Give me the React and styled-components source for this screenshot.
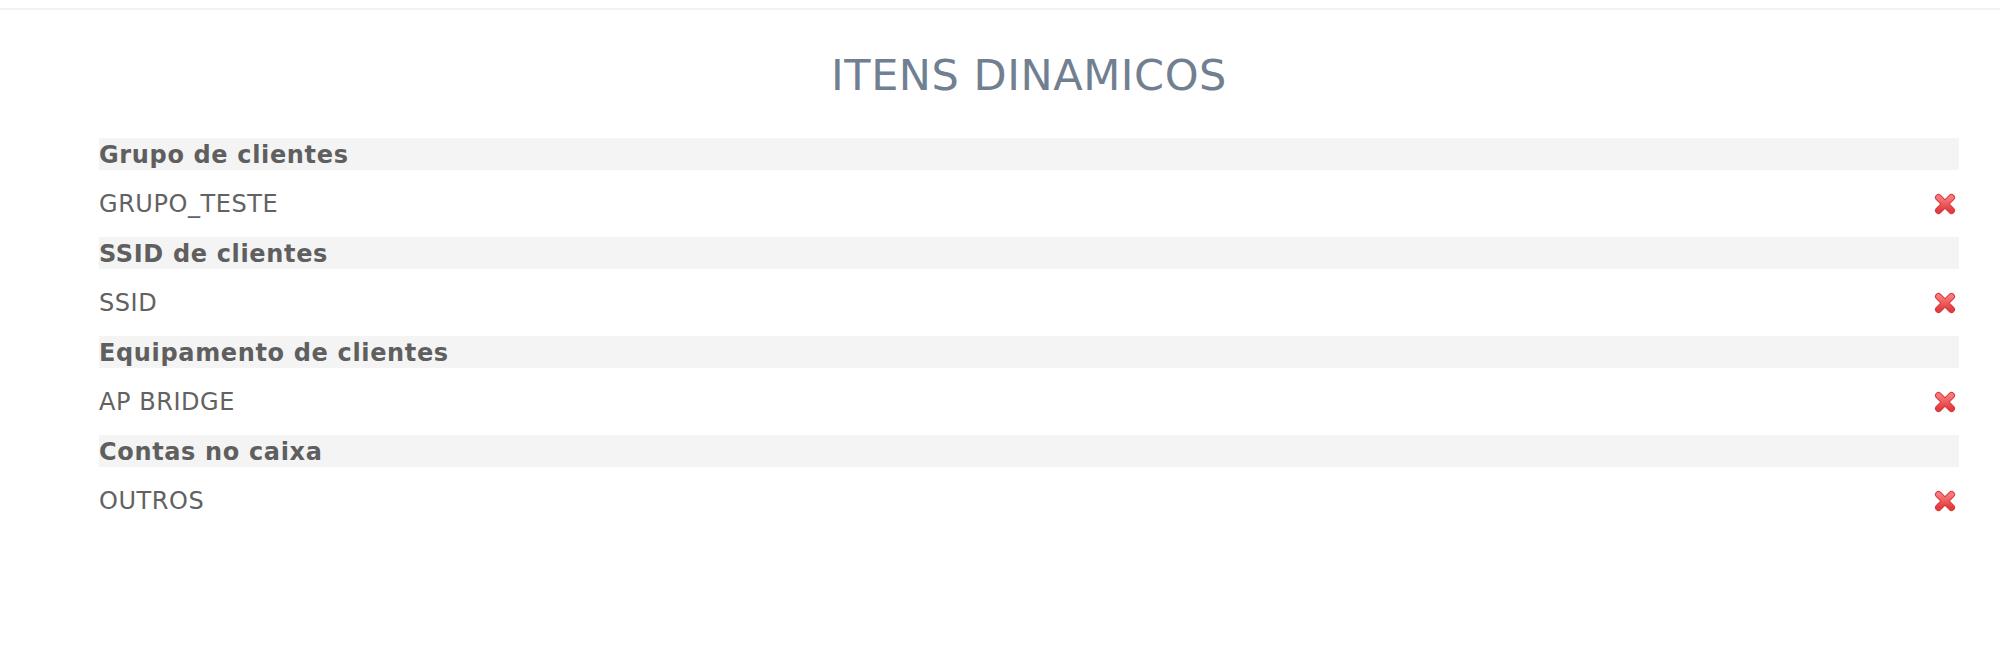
import React from 'react'
import styled, { createGlobalStyle } from 'styled-components'

const groups = [
	{ title: 'Grupo de clientes', items: ['GRUPO_TESTE'] },
	{ title: 'SSID de clientes', items: ['SSID'] },
	{ title: 'Equipamento de clientes', items: ['AP BRIDGE'] },
	{ title: 'Contas no caixa', items: ['OUTROS'] },
]

const GlobalStyle = createGlobalStyle`
	html, body {
		margin: 0;
		padding: 0;
		background: #ffffff;
	}
	body {
		font-family: 'DejaVu Sans', Verdana, sans-serif;
	}
`

const DeleteIcon = () => (
	<svg width="24" height="24" viewBox="0 0 24 24">
		<defs>
			<linearGradient id="xred" x1="0" y1="0" x2="0" y2="1">
				<stop offset="0" stopColor="#f77b7b" />
				<stop offset="1" stopColor="#e23c3f" />
			</linearGradient>
		</defs>
		<g strokeLinecap="round">
			<path d="M5.5 5.5 L18.5 18.5 M18.5 5.5 L5.5 18.5" stroke="#d8393c" strokeWidth="7" />
			<path d="M5.5 5.5 L18.5 18.5 M18.5 5.5 L5.5 18.5" stroke="url(#xred)" strokeWidth="5" />
		</g>
	</svg>
)

const App = () => {
	return (
		<>
			<GlobalStyle />
			<TopRule />
			<Page>
				<Title>ITENS DINAMICOS</Title>
				<List>
					{groups.map((group) => (
						<Group key={group.title}>
							<GroupHeader>{group.title}</GroupHeader>
							{group.items.map((item) => (
								<ItemRow key={item}>
									<ItemName>{item}</ItemName>
									<RemoveButton title="Remover">
										<DeleteIcon />
									</RemoveButton>
								</ItemRow>
							))}
						</Group>
					))}
				</List>
			</Page>
		</>
	)
}

const TopRule = styled.div`
	margin-top: 8px;
	height: 2px;
	background-color: #f2f2f2;
`

const Page = styled.div`
	padding: 0 41px 0 99px;
`

const Title = styled.h1`
	margin: 40px 0 38px;
	text-align: center;
	font-family: 'DejaVu Sans', Verdana, sans-serif;
	font-weight: normal;
	font-size: 43px;
	letter-spacing: 0.55px;
	line-height: normal;
	color: #708090;
`

const List = styled.div`
	display: flex;
	flex-direction: column;
`

const Group = styled.div`
	display: flex;
	flex-direction: column;
`

const GroupHeader = styled.div`
	height: 32px;
	line-height: 34px;
	background-color: #f4f4f4;
	font-weight: bold;
	font-size: 24px;
	letter-spacing: 0.65px;
	color: #5f5f5f;
`

const ItemRow = styled.div`
	display: flex;
	align-items: center;
	justify-content: space-between;
	height: 67px;
`

const ItemName = styled.span`
	font-size: 24px;
	letter-spacing: 0.55px;
	color: #626262;
`

const RemoveButton = styled.span`
	display: flex;
	margin-right: 2px;
	cursor: pointer;
`

export default App
